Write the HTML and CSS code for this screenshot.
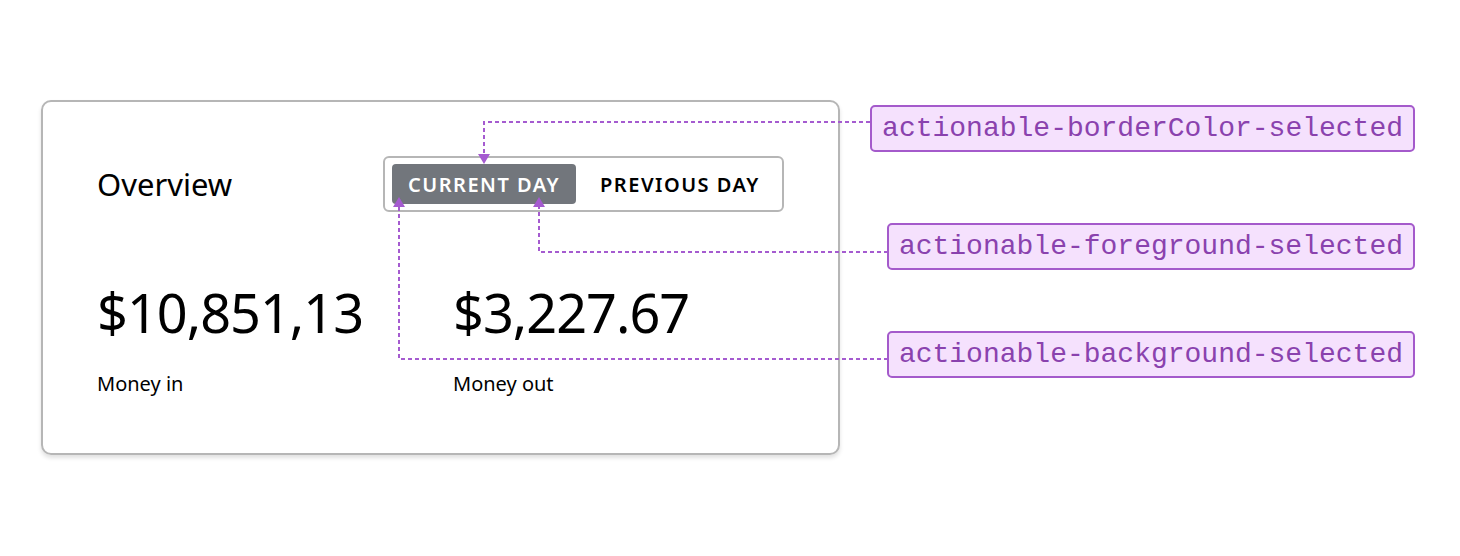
FILE: index.html
```html
<!DOCTYPE html>
<html>
<head>
    <title>Overview - selected tokens</title>
    <meta charset="utf-8">
    <link rel="stylesheet" href="styles.css">
</head>
<body>
    <div class="stage">
        <div class="card">
            <div class="card-head">
                <h2 class="title">Overview</h2>
                <div class="segmented">
                    <button class="seg-btn selected">CURRENT DAY</button>
                    <button class="seg-btn">PREVIOUS DAY</button>
                </div>
            </div>
            <div class="stats">
                <div class="stat">
                    <div class="amount">$10,851,13</div>
                    <div class="label">Money in</div>
                </div>
                <div class="stat">
                    <div class="amount">$3,227.67</div>
                    <div class="label">Money out</div>
                </div>
            </div>
        </div>

        <div class="tokens">
            <div class="token token-border">actionable-borderColor-selected</div>
            <div class="token token-fg">actionable-foreground-selected</div>
            <div class="token token-bg">actionable-background-selected</div>
        </div>

        <!-- connectors between tokens and the selected segment -->
        <svg class="connectors" width="1460" height="556" viewBox="0 0 1460 556">
            <g class="dash">
                <path d="M870 122 H484 V155"/>
                <path d="M888 252 H539 V206"/>
                <path d="M888 359 H399 V206"/>
            </g>
            <g class="tip">
                <path d="M478 154 L490 154 L484 164 Z"/>
                <path d="M533 207 L545 207 L539 197 Z"/>
                <path d="M393 207 L405 207 L399 197 Z"/>
            </g>
        </svg>
    </div>
</body>
</html>
```

FILE: styles.css
```css
body {
    margin: 0;
    background-color: #fff;
    color: #000;
    font-family: 'Noto Sans', 'Open Sans', sans-serif;
}

.stage {
    position: relative;
    width: 1460px;
    height: 556px;
    display: flex;
    align-items: flex-start;
}

.card {
    box-sizing: border-box;
    width: 799px;
    height: 355px;
    margin: 100px 0 0 41px;
    padding: 54px 0 0 54px;
    border: 2px solid #b6b6b6;
    border-radius: 10px;
    box-shadow: 0 3px 4px rgba(0, 0, 0, 0.12);
}

.card-head {
    display: flex;
    align-items: center;
}

.title {
    width: 286px;
    margin: 0;
    font-size: 31px;
    font-weight: 400;
}

.segmented {
    display: flex;
    gap: 8px;
    padding: 6px 6px 6px 7px;
    border: 2px solid #b6b6b6;
    border-radius: 6px;
}

.seg-btn {
    height: 40px;
    padding: 0 16px;
    border: none;
    border-radius: 4px;
    background: transparent;
    color: #000;
    font-family: 'Noto Sans', sans-serif;
    font-size: 20px;
    font-weight: 600;
    letter-spacing: 1.5px;
    white-space: nowrap;
}

.seg-btn.selected {
    background-color: #72767c;
    color: #fff;
}

.stats {
    display: grid;
    grid-template-columns: 356px auto;
    margin-top: 68px;
}

.amount {
    font-size: 54px;
    line-height: 64px;
    letter-spacing: -1px;
}

.label {
    margin-top: 26px;
    font-size: 20px;
}

.tokens {
    display: flex;
    flex-direction: column;
    align-items: flex-end;
    margin: 105px 0 0 auto;
    padding-right: 45px;
}

.token {
    box-sizing: border-box;
    height: 47px;
    padding: 0 10px;
    display: flex;
    align-items: center;
    border: 2px solid #a45acb;
    border-radius: 5px;
    background-color: #f5e1fd;
    color: #8a42ae;
    font-family: 'Liberation Mono', 'DejaVu Sans Mono', monospace;
    font-size: 28px;
}

.token-fg {
    margin-top: 71px;
}

.token-bg {
    margin-top: 61px;
}

.connectors {
    position: absolute;
    left: 0;
    top: 0;
    pointer-events: none;
}

.dash path {
    fill: none;
    stroke: #a55bd0;
    stroke-width: 2;
    stroke-dasharray: 4 3;
}

.tip path {
    fill: #a55bd0;
}
```
